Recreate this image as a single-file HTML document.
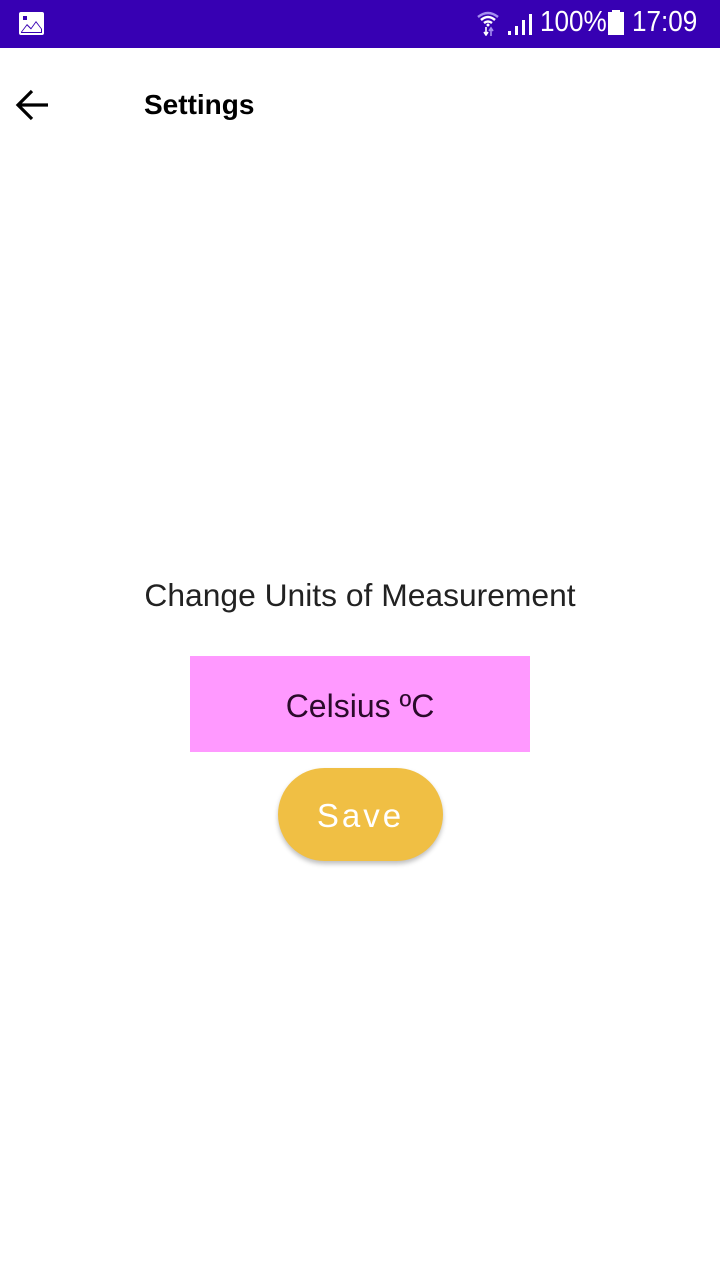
<!DOCTYPE html>
<html><head><meta charset="utf-8"><style>
body{margin:0;width:720px;height:1280px;background:#fff;font-family:"Liberation Sans",sans-serif;position:relative;overflow:hidden}
.sb{position:absolute;left:0;top:0;width:720px;height:48px;background:#3700b3;color:#fff}
.abs{position:absolute}
</style></head><body>
<div class="sb">
  <svg class="abs" style="left:19px;top:12px" width="25" height="23" viewBox="0 0 25 23"><rect x="0" y="0" width="25" height="23" rx="2" fill="#fff"/><rect x="4" y="4" width="4" height="4" fill="#3700b3"/><path d="M2 20 L8 12 L12 16 L17 9 L23 17 L23 21 L2 21Z" fill="#3700b3"/><path d="M3 20 L8 13.5 L12 17.5 L17 10.5 L22 17 L22 20Z" fill="#fff"/></svg>
  <svg class="abs" style="left:476px;top:10px" width="24" height="26" viewBox="0 0 24 26"><path d="M2 7 Q12 -1 22 7" stroke="#a58ff0" stroke-width="2.5" fill="none"/><path d="M5 10 Q12 4 19 10" stroke="#fff" stroke-width="2.5" fill="none"/><path d="M8 13 Q12 10 16 13" stroke="#fff" stroke-width="2.5" fill="none"/><circle cx="12" cy="15" r="1.5" fill="#fff"/><path d="M10 17v7M8 22l2 3 2-3" stroke="#fff" stroke-width="1.6" fill="none"/><path d="M15 26v-7M13 21l2-3 2 3" stroke="#a58ff0" stroke-width="1.6" fill="none"/></svg>
  <svg class="abs" style="left:507px;top:12px" width="26" height="24" viewBox="0 0 26 24"><rect x="1" y="19" width="3" height="4" fill="#fff"/><rect x="8" y="14" width="3" height="9" fill="#fff"/><rect x="15" y="8" width="3" height="15" fill="#fff"/><rect x="22" y="2" width="3" height="21" fill="#fff"/></svg>
  <div class="abs" style="left:540px;top:6px;font-size:29px;transform:scaleX(0.9);transform-origin:left">100%</div>
  <svg class="abs" style="left:607px;top:10px" width="18" height="26" viewBox="0 0 18 26"><rect x="5" y="0" width="8" height="3" fill="#fff"/><rect x="1" y="2" width="16" height="23" fill="#fff"/></svg>
  <div class="abs" style="left:632px;top:6px;font-size:29px;transform:scaleX(0.9);transform-origin:left">17:09</div>
</div>
<svg class="abs" style="left:14px;top:88px" width="36" height="34" viewBox="0 0 36 34"><path d="M34 17H4M18 3L4 17l14 14" stroke="#000" stroke-width="3.2" fill="none"/></svg>
<div class="abs" style="left:144px;top:89px;font-size:28px;font-weight:bold;color:#000">Settings</div>
<div class="abs" style="left:0;width:720px;text-align:center;top:577px;font-size:31.8px;color:#222">Change Units of Measurement</div>
<div class="abs" style="left:190px;top:656px;width:340px;height:96px;background:#ff99ff;text-align:center;line-height:100px;font-size:32px;color:#2a0a2a">Celsius ºC</div>
<div class="abs" style="left:278px;top:768px;width:165px;height:93px;border-radius:47px;background:#f0bf44;box-shadow:0 3px 5px rgba(0,0,0,.25);text-align:center;line-height:95px;font-size:33px;color:#fff;letter-spacing:3px">Save</div>
</body></html>
